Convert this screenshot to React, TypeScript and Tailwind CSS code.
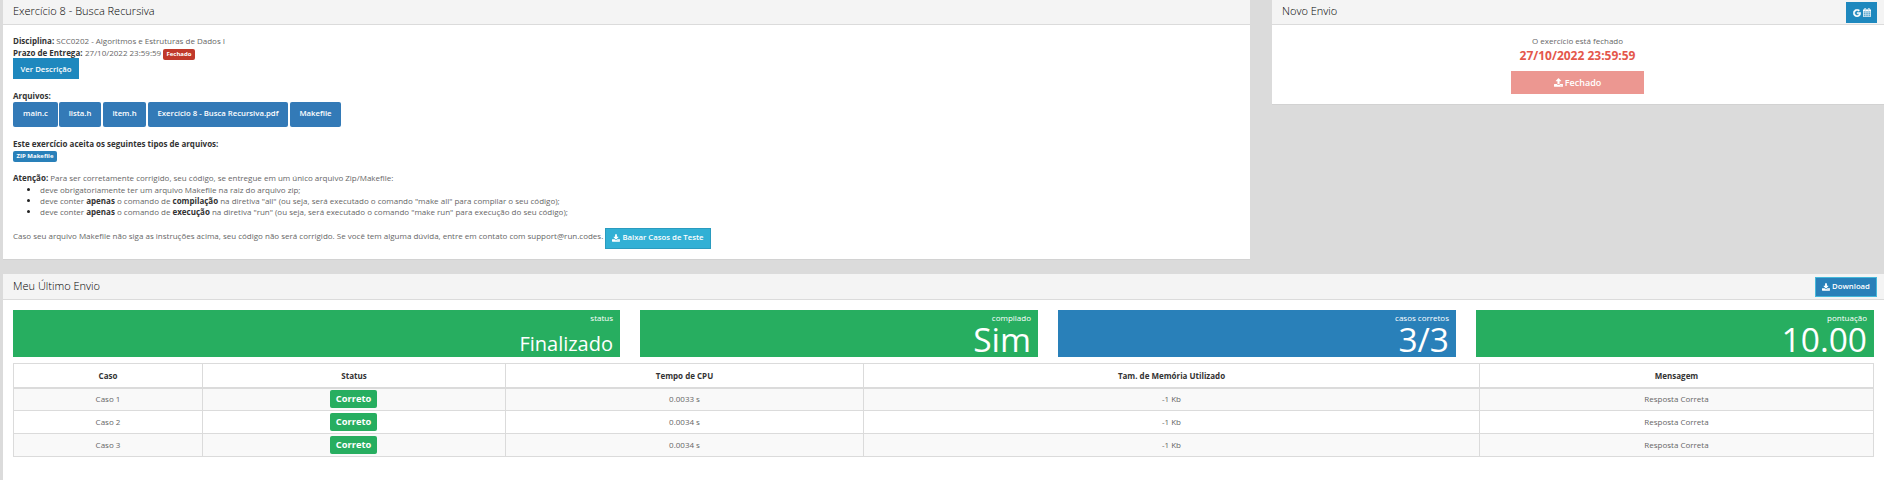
import type { ReactNode } from 'react';
import { FaGoogle } from 'react-icons/fa';

const DownloadGlyph = ({ className = '' }: { className?: string }) => (
  <svg viewBox="0 0 1664 1536" className={className} fill="currentColor">
    <path d="M1280 1216q0-26-19-45t-45-19-45 19-19 45 19 45 45 19 45-19 19-45zm256 0q0-26-19-45t-45-19-45 19-19 45 19 45 45 19 45-19 19-45zm128-224v320q0 40-28 68t-68 28H96q-40 0-68-28t-28-68V992q0-40 28-68t68-28h465l135 136q58 56 136 56t136-56l136-136h464q40 0 68 28t28 68zm-325-569q17 41-14 70l-448 448q-18 19-45 19t-45-19L339 493q-31-29-14-70 17-39 59-39h256V-64q0-26 19-45t45-19h256q26 0 45 19t19 45v448h256q42 0 59 39z" transform="translate(0 128)" />
  </svg>
);

const UploadGlyph = ({ className = '' }: { className?: string }) => (
  <svg viewBox="0 0 1664 1600" className={className} fill="currentColor">
    <path d="M1280 1472q0-26-19-45t-45-19-45 19-19 45 19 45 45 19 45-19 19-45zm256 0q0-26-19-45t-45-19-45 19-19 45 19 45 45 19 45-19 19-45zm128-224v320q0 40-28 68t-68 28H96q-40 0-68-28t-28-68v-320q0-40 28-68t68-28h427q21 56 70.500 92t110.500 36h256q61 0 110.500-36t70.500-92h427q40 0 68 28t28 68zm-325-648q-17 40-59 40h-256v448q0 26-19 45t-45 19H704q-26 0-45-19t-19-45V640H384q-42 0-59-40-17-39 14-69L787 83q18-19 45-19t45 19l448 448q31 30 14 69z" transform="translate(0 -64)" />
  </svg>
);

const CalendarGlyph = ({ className = '' }: { className?: string }) => (
  <svg viewBox="0 0 1664 1792" className={className} fill="currentColor" stroke="currentColor" strokeWidth="50">
    <path
      fillRule="evenodd"
      d="M128 1664h288v-288H128zm352 0h320v-288H480zm-352-352h288V992H128zm352 0h320V992H480zM128 928h288V640H128zm736 736h320v-288H864zM480 928h320V640H480zm768 736h288v-288h-288zm-384-352h320V992H864zM512 448V160q0-32-32-32h-64q-32 0-32 32v288q0 32 32 32h64q32 0 32-32zm736 864h288V992h-288zM864 928h320V640H864zm384 0h288V640h-288zm32-480V160q0-32-32-32h-64q-32 0-32 32v288q0 32 32 32h64q32 0 32-32zm384-64v1280q0 128-128 128H128Q0 1792 0 1664V384q0-128 128-128h128v-96Q256 0 416 0h64q160 0 160 160v96h384v-96q0-160 160-160h64q160 0 160 160v96h128q128 0 128 128z"
    />
  </svg>
);

function Panel({ title, action, className = '', headerClass = 'h-[25px] pt-[3px]', children }: { title: string; action?: ReactNode; className?: string; headerClass?: string; children: ReactNode }) {
  return (
    <section className={`flex flex-col bg-white ${className}`}>
      <header className={`flex shrink-0 items-start justify-between border-b border-[#dbdbdb] bg-[#f4f4f4] pl-[10px] pr-[7px] ${headerClass}`}>
        <h2 className="text-[11px] leading-[15px] font-light text-black">{title}</h2>
        {action}
      </header>
      {children}
    </section>
  );
}

const files = [
  { name: 'main.c', box: 'w-[45px] mr-px' },
  { name: 'lista.h', box: 'w-[42px] mr-[2px]' },
  { name: 'item.h', box: 'w-[43px] mr-[2px]' },
  { name: 'Exercício 8 - Busca Recursiva.pdf', box: 'w-[140px] mr-[2px]' },
  { name: 'Makefile', box: 'w-[51px]' },
];

const stats = [
  { label: 'status', value: 'Finalizado', box: 'w-[607px] bg-[#27ae60]', text: 'text-[20px] leading-[27px] mt-[6px]' },
  { label: 'compilado', value: 'Sim', box: 'w-[398px] bg-[#27ae60]', text: 'text-[33.500px] leading-[26px] mt-[2px]' },
  { label: 'casos corretos', value: '3/3', box: 'w-[398px] bg-[#2980b9]', text: 'text-[33.500px] leading-[26px] mt-[2px]' },
  { label: 'pontuação', value: '10.00', box: 'w-[398px] bg-[#27ae60]', text: 'text-[33.500px] leading-[26px] mt-[2px]' },
];

const columns = ['Caso', 'Status', 'Tempo de CPU', 'Tam. de Memória Utilizado', 'Mensagem'];
const rows = [
  ['Caso 1', '0.0033 s'],
  ['Caso 2', '0.0034 s'],
  ['Caso 3', '0.0034 s'],
];

const cell = 'border border-[#dbdbdb] p-0 pb-px text-center align-middle';
const B = ({ children }: { children: ReactNode }) => <b className="font-bold text-[#333]">{children}</b>;

export default function App() {
  return (
    <div className="flex h-[480px] w-[1884px] flex-col overflow-hidden bg-[#dbdbdb] pl-[3px] font-['Open_Sans',sans-serif] text-[8px] leading-[11px] text-[#666]">
      <div className="flex h-[274px] shrink-0 items-start justify-between">
        <Panel title="Exercício 8 - Busca Recursiva" className="h-[260px] w-[1247px] border-b border-[#d2d2d2]">
          <div className="flex flex-col items-start pt-[10px] pl-[10px]">
            <p className="h-[12px]"><B>Disciplina:</B> SCC0202 - Algoritmos e Estruturas de Dados I</p>
            <div className="flex h-[11px] items-start">
              <p className="flex w-[150px] justify-between"><B>Prazo de Entrega:</B><span className="w-[78px]">27/10/2022 23:59:59</span></p>
              <span className="mt-[2px] h-[11px] w-[32px] rounded-[2px] bg-[#c0392b] text-center text-[6px] leading-[10px] font-bold text-white">Fechado</span>
            </div>
            <button className="h-[21px] w-[66px] bg-[#1e88be] text-[7.750px] leading-[22px] font-semibold text-white">Ver Descrição</button>
            <p className="mt-[11px] h-[12px]"><B>Arquivos:</B></p>
            <div className="flex">
              {files.map((f) => (
                <button key={f.name} className={`h-[25px] rounded-[2px] bg-[#337ab7] pb-[2px] text-center text-[7.750px] leading-[23px] font-semibold whitespace-nowrap text-white ${f.box}`}>{f.name}</button>
              ))}
            </div>
            <p className="mt-[11px] h-[12px]"><B>Este exercício aceita os seguintes tipos de arquivos:</B></p>
            <span className="mt-px h-[11px] w-[44px] rounded-[2px] bg-[#2980b9] text-center text-[6px] leading-[10px] font-bold text-white">ZIP Makefile</span>
            <p className="mt-[10px] h-[12px]"><B>Atenção:</B> Para ser corretamente corrigido, seu código, se entregue em um único arquivo Zip/Makefile:</p>
            <ul className="list-disc pl-[27px] marker:text-[#222]">
              <li>deve obrigatoriamente ter um arquivo Makefile na raiz do arquivo zip;</li>
              <li>deve conter <B>apenas</B> o comando de <B>compilação</B> na diretiva "all" (ou seja, será executado o comando "make all" para compilar o seu código);</li>
              <li>deve conter <B>apenas</B> o comando de <B>execução</B> na diretiva "run" (ou seja, será executado o comando "make run" para execução do seu código);</li>
            </ul>
            <div className="mt-[11px] flex items-start">
              <p className="w-[592px] pt-[2px] whitespace-nowrap">Caso seu arquivo Makefile não siga as instruções acima, seu código não será corrigido. Se você tem alguma dúvida, entre em contato com support@run.codes.</p>
              <button className="flex h-[21px] w-[106px] items-center justify-center gap-[2px] border border-[#2a9bbf] bg-[#31b0d5] pb-[2px] text-[7.750px] font-semibold whitespace-nowrap text-white">
                <DownloadGlyph className="size-[8px]" />
                <span>Baixar Casos de Teste</span>
              </button>
            </div>
          </div>
        </Panel>

        <Panel
          title="Novo Envio"
          className="h-[105px] w-[612px] border-b border-[#d2d2d2]"
          action={
            <button className="-mt-px flex h-[21px] w-[31px] items-center justify-center gap-[2px] bg-[#1e88be] text-white">
              <FaGoogle className="size-[8px] stroke-current stroke-[30]" />
              <CalendarGlyph className="h-[9px] w-[8px]" />
            </button>
          }
        >
          <div className="flex flex-col items-center pt-[10px] pr-px">
            <p className="h-[12px]">O exercício está fechado</p>
            <p className="text-[12px] leading-[17px] font-bold text-[#e4574b]">27/10/2022 23:59:59</p>
            <button className="mt-[7px] flex h-[23px] w-[133px] items-center justify-center gap-[2px] bg-[#ec9791] text-[9px] font-semibold text-white">
              <UploadGlyph className="size-[9px]" />
              <span>Fechado</span>
            </button>
          </div>
        </Panel>
      </div>

      <Panel
        title="Meu Último Envio"
        className="grow"
        headerClass="h-[26px] pt-[4px]"
        action={
          <button className="-mt-px flex h-[20px] w-[62px] items-center justify-center gap-[2px] border border-[#46b8da] bg-[#2980b9] pb-px text-[7.750px] font-semibold text-white">
            <DownloadGlyph className="size-[8px]" />
            <span>Download</span>
          </button>
        }
      >
        <div className="flex flex-col gap-[6px] pt-[10px] pr-[10px] pl-[10px]">
          <div className="flex justify-between">
            {stats.map((s) => (
              <div key={s.label} className={`flex h-[47px] flex-col items-end pt-[2px] pr-[7px] text-white ${s.box}`}>
                <span className="h-[12px]">{s.label}</span>
                <span className={s.text}>{s.value}</span>
              </div>
            ))}
          </div>
          <table className="w-full table-fixed border-collapse">
            <colgroup>
              <col className="w-[189px]" />
              <col className="w-[303px]" />
              <col className="w-[358px]" />
              <col className="w-[616px]" />
              <col />
            </colgroup>
            <thead>
              <tr className="h-[24px]">
                {columns.map((c) => (
                  <th key={c} className="border border-b-2 border-[#dbdbdb] p-0 pt-px text-center align-middle font-bold text-[#333]">{c}</th>
                ))}
              </tr>
            </thead>
            <tbody>
              {rows.map(([name, time]) => (
                <tr key={name} className="h-[23px] odd:bg-[#f9f9f9]">
                  <td className={cell}>{name}</td>
                  <td className="border border-[#dbdbdb] p-0 pr-px text-center align-middle">
                    <span className="mx-auto block h-[18px] w-[47px] rounded-[2px] bg-[#27ae60] text-[9.300px] leading-[17px] font-bold text-white">Correto</span>
                  </td>
                  <td className={cell}>{time}</td>
                  <td className={cell}>-1 Kb</td>
                  <td className={cell}>Resposta Correta</td>
                </tr>
              ))}
            </tbody>
          </table>
        </div>
      </Panel>
    </div>
  );
}
